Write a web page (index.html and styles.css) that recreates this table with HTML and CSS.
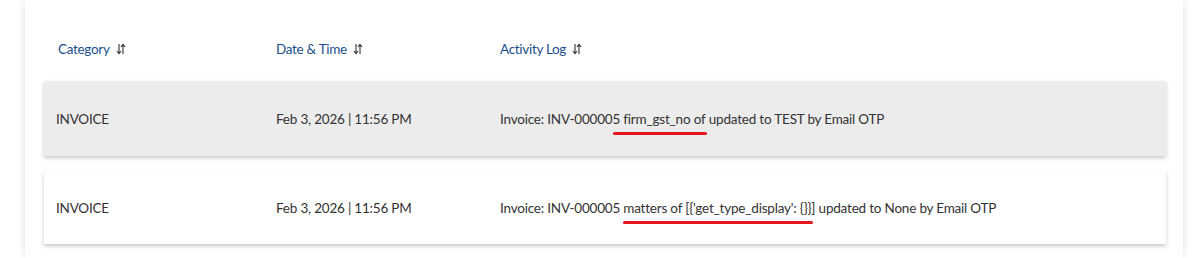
FILE: index.html
```html
<!DOCTYPE html>
<html>
<head>
<meta charset="utf-8">
<link rel="stylesheet" href="styles.css">
</head>
<body>
<div class="page">
  <div class="card">
    <div class="head">
      <div class="th">Category <svg class="sort" viewBox="0 0 10 12" width="10" height="12"><path d="M3 1v9.5M0.9 8L3 10.6 5.1 8M7 11V1.5M4.9 4L7 1.4 9.1 4" fill="none" stroke="#333" stroke-width="1.1"/></svg></div>
      <div class="th">Date &amp; Time <svg class="sort" viewBox="0 0 10 12" width="10" height="12"><path d="M3 1v9.5M0.9 8L3 10.6 5.1 8M7 11V1.5M4.9 4L7 1.4 9.1 4" fill="none" stroke="#333" stroke-width="1.1"/></svg></div>
      <div class="th">Activity Log <svg class="sort" viewBox="0 0 10 12" width="10" height="12"><path d="M3 1v9.5M0.9 8L3 10.6 5.1 8M7 11V1.5M4.9 4L7 1.4 9.1 4" fill="none" stroke="#333" stroke-width="1.1"/></svg></div>
    </div>
    <div class="row row-hover">
      <div class="td">INVOICE</div>
      <div class="td">Feb 3, 2026 | 11:56 PM</div>
      <div class="td">Invoice: INV-000005 <span class="mark mark-a">firm_gst_no of</span> updated to TEST by Email OTP</div>
    </div>
    <div class="row row-second">
      <div class="td">INVOICE</div>
      <div class="td">Feb 3, 2026 | 11:56 PM</div>
      <div class="td">Invoice: INV-000005 <span class="mark mark-b">matters of [{'get_type_display': {}}]</span> updated to None by Email OTP</div>
    </div>
  </div>
</div>
</body>
</html>
```
FILE: styles.css
```css
html, body {
  margin: 0;
  padding: 0;
  background: #ffffff;
}
body {
  font-family: Lato, "Open Sans", sans-serif;
  font-size: 13.5px;
  color: #333;
  width: 1199px;
  height: 258px;
  overflow: hidden;
}
.page {
  padding: 0 16px 0 25px;
}
.card {
  background: #fff;
  width: 1158px;
  box-shadow: 0 0 8px rgba(0, 0, 0, 0.12);
  padding: 0 17px 14px 19px;
  box-sizing: border-box;
}
.head, .row {
  display: grid;
  align-items: center;
}
.head {
  grid-template-columns: 218px 224px 1fr;
  height: 65px;
  padding-top: 16px;
  padding-left: 14px;
}
.row {
  grid-template-columns: 220px 224px 1fr;
  padding-left: 12px;
  box-shadow: 0 2px 4px rgba(0, 0, 0, 0.22);
}
.th {
  color: #1b4f8c;
  display: flex;
  align-items: center;
  gap: 6px;
  letter-spacing: -0.3px;
}
.sort {
  margin-top: 1px;
}
.row-hover {
  background: #ececec;
  height: 75px;
}
.row-second {
  background: #fff;
  height: 72px;
  margin-top: 16px;
}
.td {
  color: #333;
  letter-spacing: -0.2px;
}
.mark {
  position: relative;
}
.mark::after {
  content: "";
  position: absolute;
  bottom: -8px;
  height: 3px;
  border-radius: 2px;
  background: #e3161d;
}
.mark-a::after {
  left: -10px;
  right: -2px;
}
.mark-b::after {
  left: 0;
  right: 2px;
}
```
